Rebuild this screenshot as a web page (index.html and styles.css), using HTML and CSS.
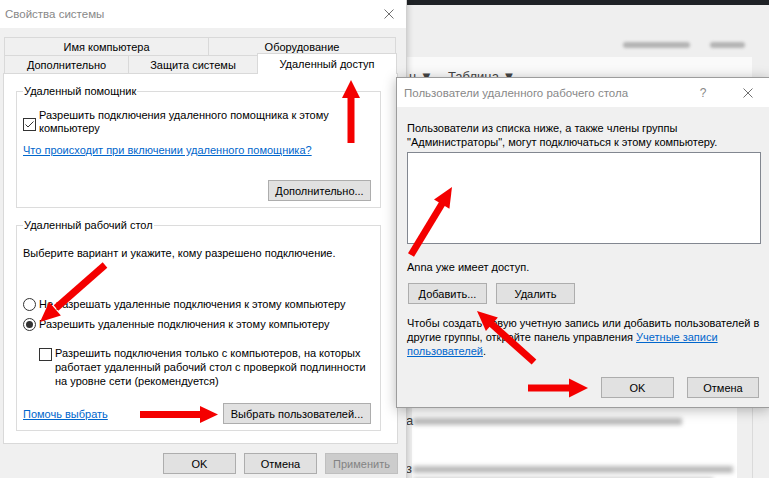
FILE: index.html
```html
<!DOCTYPE html>
<html lang="ru">
<head>
<meta charset="utf-8">
<title>Свойства системы</title>
<link rel="stylesheet" href="styles.css">
</head>
<body>
<div class="desk">

  <div class="app">
    <div class="app-top"></div>
    <div class="app-toolbar"><span class="smudge s1"></span><span class="smudge s2"></span></div>
    <div class="app-band"><span class="menu-item">ц ▼</span><span class="menu-item">Таблица ▼</span></div>
    <div class="app-main">
      <div class="page">
        <div class="pline l1"><span class="ch">а</span><span class="bar"></span></div>
        <div class="pline l2"><span class="ch">з</span><span class="bar"></span></div>
        <div class="pline l3"><span class="gap"></span><span class="bar"></span></div>
      </div>
      <div class="side"></div>
      <div class="side2"></div>
    </div>
  </div>

  <div class="win win-sys">
    <div class="titlebar">
      <span class="title">Свойства системы</span>
      <svg class="close" viewBox="0 0 10 10"><path d="M0.5 0.5L9.5 9.5M9.5 0.5L0.5 9.5" stroke="#707070" stroke-width="1" fill="none"/></svg>
    </div>
    <div class="sys-body">
      <div class="tabs">
        <div class="tab-row">
          <div class="tab t-name">Имя компьютера</div>
          <div class="tab t-hw last">Оборудование</div>
        </div>
        <div class="tab-row">
          <div class="tab t-adv">Дополнительно</div>
          <div class="tab t-prot">Защита системы</div>
          <div class="tab t-remote last active">Удаленный доступ</div>
        </div>
      </div>
      <div class="panel">
        <fieldset class="group g1">
          <legend>Удаленный помощник</legend>
          <div class="cb-row center">
            <span class="box"><svg class="tick" viewBox="0 0 11 11"><path d="M1.5 5.5L4 8L9.5 2.5" stroke="#333" stroke-width="1" fill="none"/></svg></span>
            <span class="cb-label">Разрешить подключения удаленного помощника к этому<br>компьютеру</span>
          </div>
          <a class="link l-help">Что происходит при включении удаленного помощника?</a>
          <div class="btn-row end adv-row"><button class="btn b-adv">Дополнительно...</button></div>
        </fieldset>
        <fieldset class="group g2">
          <legend>Удаленный рабочий стол</legend>
          <p class="intro">Выберите вариант и укажите, кому разрешено подключение.</p>
          <div class="radio-row r1"><span class="radio"></span><span>Не разрешать удаленные подключения к этому компьютеру</span></div>
          <div class="radio-row r2"><span class="radio on"></span><span>Разрешить удаленные подключения к этому компьютеру</span></div>
          <div class="cb-row nla">
            <span class="box"></span>
            <span class="cb-label">Разрешить подключения только с компьютеров, на которых<br>работает удаленный рабочий стол с проверкой подлинности<br>на уровне сети (рекомендуется)</span>
          </div>
          <div class="btn-row between"><a class="link">Помочь выбрать</a><button class="btn b-users">Выбрать пользователей...</button></div>
        </fieldset>
      </div>
      <div class="btn-row end dlg-btns">
        <button class="btn w73">OK</button>
        <button class="btn w73">Отмена</button>
        <button class="btn w73 disabled">Применить</button>
      </div>
    </div>
  </div>

  <div class="win win-users">
    <div class="titlebar">
      <span class="title">Пользователи удаленного рабочего стола</span>
      <span class="help">?</span>
      <svg class="close" viewBox="0 0 10 10"><path d="M0.5 0.5L9.5 9.5M9.5 0.5L0.5 9.5" stroke="#707070" stroke-width="1" fill="none"/></svg>
    </div>
    <div class="users-body">
      <p>Пользователи из списка ниже, а также члены группы<br>"Администраторы", могут подключаться к этому компьютеру.</p>
      <div class="listbox"></div>
      <p class="access">Anna уже имеет доступ.</p>
      <div class="btn-row user-btns">
        <button class="btn w79">Добавить...</button>
        <button class="btn w79">Удалить</button>
      </div>
      <p class="info">Чтобы создать новую учетную запись или добавить пользователей в<br>другие группы, откройте панель управления <a class="ilink">Учетные записи<br>пользователей</a>.</p>
      <div class="btn-row end ok-row">
        <button class="btn w73">OK</button>
        <button class="btn w72">Отмена</button>
      </div>
    </div>
  </div>

  <svg class="arrows" width="769" height="478" viewBox="0 0 769 478">
    <g fill="#f40000">
      <rect x="347.5" y="94" width="7" height="49"/>
      <polygon points="351,80 342,98 360,98"/>
      <rect x="140" y="411" width="62" height="7"/>
      <polygon points="218,414.5 200,406 200,423"/>
      <rect x="528" y="384.5" width="44" height="7"/>
      <polygon points="588,388 569,378.5 569,397.5"/>
      <polygon points="40,322 60.9,315.6 49.1,302"/>
      <polygon points="452,187 449.4,208.7 434,199.5"/>
      <polygon points="477,311 497.9,317.6 485.9,331"/>
    </g>
    <g stroke="#f40000" stroke-width="7">
      <line x1="105" y1="265" x2="56" y2="308"/>
      <line x1="411" y1="255" x2="442.5" y2="203"/>
      <line x1="534" y1="362" x2="491" y2="323.5"/>
    </g>
  </svg>
</div>
</body>
</html>
```

FILE: styles.css
```css
* { box-sizing: border-box; }
html, body { margin: 0; padding: 0; }
body {
  width: 769px;
  height: 478px;
  overflow: hidden;
  background: #f0f0f0;
  font-family: "Liberation Sans", Arial, sans-serif;
  font-size: 11px;
  color: #000;
}
.desk { position: relative; width: 769px; height: 478px; overflow: hidden; }

/* background application */
.app {
  position: absolute;
  left: 406px;
  top: 0;
  width: 363px;
  height: 478px;
  background: #efefef;
  display: flex;
  flex-direction: column;
  z-index: 1;
}
.app-top { height: 5px; flex-shrink: 0; background: #1f2226; }
.app-toolbar {
  height: 52px;
  flex-shrink: 0;
  display: flex;
  align-items: flex-start;
  gap: 20px;
  padding: 37px 0 0 217px;
}
.smudge { height: 6px; border-radius: 3px; background: #b4b4b4; filter: blur(1.5px); }
.s1 { width: 67px; }
.s2 { width: 35px; }
.app-band {
  height: 40px;
  flex-shrink: 0;
  margin-right: 17px;
  padding: 12px 0 0 3px;
  background: #fafafa;
  display: flex;
  gap: 15px;
  color: #444;
  font-size: 13px;
  line-height: 15px;
}
.app-main { flex: 1; display: flex; }
.page {
  width: 331px;
  padding-top: 319px;
  background: linear-gradient(to right, #f0f0f0 6px, #fff 6px);
}
.pline { display: flex; align-items: center; height: 10px; gap: 1px; }
.ch { width: 6px; font-size: 13px; line-height: 10px; color: #333; }
.gap { width: 6px; }
.bar { height: 7px; background: #9d9d9d; filter: blur(2px); opacity: 0.7; }
.l1 .bar { width: 269px; }
.l2 { margin-top: 38px; }
.l2 .bar { width: 320px; }
.l3 { margin-top: 2px; }
.l3 .bar { width: 300px; }
.side { width: 15px; }
.side2 { flex: 1; border-left: 1px solid #dadada; }

/* windows */
.win { position: absolute; background: #f0f0f0; display: flex; flex-direction: column; }
.win-sys {
  left: 0;
  top: 0;
  width: 407px;
  height: 490px;
  border-right: 1px solid #d0d0d0;
  box-shadow: 1px 0 6px rgba(0, 0, 0, 0.18);
  z-index: 2;
}
.win-users {
  left: 396px;
  top: 77px;
  width: 374px;
  height: 331px;
  border: 1px solid #9c9c9c;
  box-shadow: 0 2px 12px rgba(0, 0, 0, 0.28);
  z-index: 3;
}
.titlebar {
  display: flex;
  align-items: center;
  flex-shrink: 0;
  background: #fff;
  color: #888;
  font-size: 11.5px;
}
.win-sys .titlebar { height: 28px; padding-left: 5px; }
.win-users .titlebar { height: 29px; padding-left: 7px; }
.title { flex: 1; white-space: nowrap; }
.close { width: 10px; height: 10px; flex-shrink: 0; }
.win-sys .close { margin-right: 12px; }
.win-users .close { margin-right: 16px; }
.help { width: 10px; margin-right: 35px; text-align: center; color: #888; font-size: 12px; }

/* system properties */
.sys-body { padding: 9px 8px 0 3px; }
.tabs { margin-left: 1px; }
.tab-row { display: flex; align-items: flex-start; height: 18px; }
.tab {
  height: 18px;
  display: flex;
  align-items: center;
  justify-content: center;
  white-space: nowrap;
  background: #f0f0f0;
  border-top: 1px solid #d9d9d9;
  border-left: 1px solid #d9d9d9;
}
.tab.last { border-right: 1px solid #d9d9d9; }
.t-name { width: 204px; }
.t-hw { width: 188px; }
.t-adv { width: 124px; }
.t-prot { width: 129px; }
.t-remote { width: 140px; }
.tab.active {
  position: relative;
  z-index: 1;
  height: 21px;
  margin-top: -2px;
  padding-bottom: 1px;
  background: #fff;
}
.panel {
  width: 395px;
  height: 371px;
  background: #fff;
  border: 1px solid #d9d9d9;
  padding: 10px 16px 0 12px;
}
.group {
  margin: 0;
  min-width: 0;
  border: 1px solid #dcdcdc;
  padding: 0 9px 6px 6px;
}
.group legend { padding: 0 1px; line-height: 14px; }
.g2 { margin-top: 10px; }
.cb-row { display: flex; }
.cb-row.center { align-items: center; margin-top: 11px; }
.box {
  width: 13px;
  height: 13px;
  flex-shrink: 0;
  margin-right: 3px;
  border: 1px solid #333;
  background: #fff;
  display: flex;
}
.center .box { margin-top: 5px; }
.tick { width: 11px; height: 11px; }
.cb-label { line-height: 13px; }
.link { display: block; color: #0066cc; text-decoration: underline; line-height: 14px; }
.l-help { margin-top: 8px; }
.btn-row { display: flex; }
.btn-row.end { justify-content: flex-end; }
.btn-row.between { justify-content: space-between; align-items: center; margin-top: 15px; }
.adv-row { margin-top: 23px; }
.btn {
  height: 21px;
  padding: 0;
  border: 1px solid #adadad;
  background: #e1e1e1;
  font: inherit;
  color: #000;
  display: flex;
  align-items: center;
  justify-content: center;
}
.btn.disabled { background: #cccccc; border-color: #bfbfbf; color: #838383; }
.b-adv { width: 103px; }
.b-users { width: 148px; }
.w73 { width: 73px; }
.w72 { width: 72px; }
.w79 { width: 79px; }
.intro { margin: 14px 0 0; line-height: 14px; }
.radio-row { display: flex; align-items: center; line-height: 14px; }
.r1 { margin-top: 37px; }
.r2 { margin-top: 6px; }
.radio {
  width: 13px;
  height: 13px;
  flex-shrink: 0;
  margin-right: 3px;
  border: 1px solid #333;
  border-radius: 50%;
  background: #fff;
  display: flex;
  align-items: center;
  justify-content: center;
}
.radio.on::after { content: ""; width: 7px; height: 7px; border-radius: 50%; background: #333; }
.nla { margin-top: 15px; margin-left: 16px; align-items: flex-start; }
.nla .box { margin-top: 2px; }
.nla .cb-label { line-height: 14px; }
.dlg-btns { margin-top: 9px; gap: 8px; }

/* remote desktop users */
.users-body { flex: 1; padding: 14px 10px 10px 10px; }
.users-body p { margin: 0; line-height: 14px; white-space: nowrap; }
.listbox {
  width: 354px;
  height: 92px;
  margin-top: 3px;
  border: 1px solid #828790;
  background: #fff;
}
.users-body .access { margin-top: 16px; }
.user-btns { margin-top: 9px; margin-left: 1px; gap: 9px; }
.users-body .info { margin-top: 12px; }
.ilink { color: #0066cc; text-decoration: underline; }
.ok-row { margin-top: 19px; gap: 13px; }

.arrows { position: absolute; left: 0; top: 0; z-index: 10; pointer-events: none; }
```
